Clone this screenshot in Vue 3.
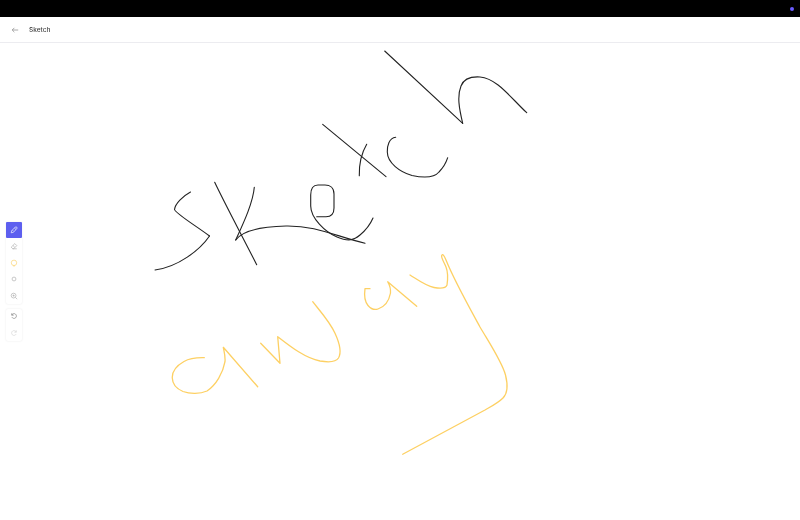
<script setup>
const blackPaths = [
  'M190.5 192 C183 196 175 204 174.5 209.5 C175 213 196 226 209.5 236',
  'M209.5 236 C200 250 178 267 155 270',
  'M214.7 182.3 C224 202 240 232 256.7 264.7',
  'M254.3 187.3 C253 203 243 224 235.7 240',
  'M235.7 240 C243 230 262 226.5 286 226 C316 225.5 335 236 365 243.3',
  'M316.7 216.7 H326 C332 216.7 334 213 334 208 V194 C334 188 330 185 325 185 H318 C313 185 310.7 189 310.7 195 V206 C310.7 218 325 232 337 237 C349 242 354 240 360 235 C366 230 370 225 373 218',
  'M322.7 124.3 L386 176.7',
  'M366.7 144.3 C361 154 359 163 359.3 175.7',
  'M395.7 137.3 C389 138 387 146 387.3 152 C387.5 163 400 172 412 175.5 C424 178 434 178 439 172 C443 168 446 163 447.7 157.7',
  'M384.7 51 L462.7 123.3',
  'M462.7 123.3 C459 108 457 96 461 86 C464 78 472 76.5 480 77 C497 78.5 510 97 526.7 112.7'
]

const yellowPaths = [
  'M204.3 357.7 C196 357.5 190 358 184 361.5 C176 366 172 372 172.3 378 C172.5 385 177 389 183 391.5 C190 394 200 394 207 391 C216 385 223 373 225 361.7 C225.5 356 224 351 223.3 347.3 L257.7 386.7',
  'M260.7 343.3 L280 363.3 L277.7 336.7 C291 347 305 358 320 361 C329 362.5 336 362 338.5 358 C342 352 339 342 335 333.3 C330 322 320 311 312.7 301.7',
  'M370 288.7 H365 C364 296 365 302 368 305.5 C371 309 375 310 378 309 C384 307 389 301 390.5 293 C391 288 389 284 387.7 281.7 L416.7 306.3',
  'M410 275 C418 280 426 286 434 287.5 C440 288.5 446 288 447 285 C448 278 448 272 446 267 C444 262 441 258 441.7 255.5 C442.5 253.5 444 255 446 260 C454 280 468 305 480 327 C490 344 502 362 505.5 375 C508 385 508 393 503 398 C498 403 492 406 485 410 L402.7 454.3'
]
</script>

<template>
  <div class="page">
    <div class="topbar"><span class="dot"></span></div>
    <header class="header">
      <svg class="back" viewBox="0 0 10 10" width="8" height="8" aria-hidden="true">
        <path d="M9 5H1.5M4.2 2.3 1.5 5l2.7 2.7" />
      </svg>
      <span class="title">Sketch</span>
    </header>
    <main class="canvas">
      <svg class="drawing" viewBox="0 43 800 477" aria-hidden="true">
        <path v-for="(d, i) in blackPaths" :key="'b' + i" class="ink-black" :d="d" />
        <path v-for="(d, i) in yellowPaths" :key="'y' + i" class="ink-yellow" :d="d" />
      </svg>
      <aside class="tools">
        <div class="group">
          <button class="tool active">
            <svg viewBox="0 0 10 10" width="8" height="8"><path d="M1.5 8.5 2 6 6.5 1.5a1 1 0 0 1 2 2L4 8 1.5 8.5ZM5.5 2.5l2 2M3.2 5.3l1.5 1.5" /></svg>
          </button>
          <button class="tool">
            <svg viewBox="0 0 10 10" width="8" height="8"><path d="M3.5 8.5 1.5 6.5 6 2l2.5 2.5-4 4h-1ZM3.7 4.3l2.2 2.2M3.5 8.5h5" /></svg>
          </button>
          <button class="tool">
            <svg class="yellow" viewBox="0 0 10 10" width="8" height="8"><circle cx="5" cy="4.8" r="3.4" /><path d="M3.8 8.7h2.4" /></svg>
          </button>
          <button class="tool">
            <svg viewBox="0 0 10 10" width="8" height="8"><circle cx="5" cy="5" r="2.4" /></svg>
          </button>
          <button class="tool">
            <svg viewBox="0 0 10 10" width="8" height="8"><circle cx="4.5" cy="4.5" r="3" /><path d="M6.7 6.7 9 9M3.2 4.5h2.6M4.5 3.2v2.6" /></svg>
          </button>
        </div>
        <div class="group">
          <button class="tool">
            <svg class="dark" viewBox="0 0 10 10" width="8" height="8"><path d="M2.2 1.6v2.4h2.4M2.2 4A3 3 0 1 1 2.4 6.5" /></svg>
          </button>
          <button class="tool">
            <svg class="faint" viewBox="0 0 10 10" width="8" height="8"><path d="M7.8 1.6v2.4H5.4M7.8 4A3 3 0 1 0 7.6 6.5" /></svg>
          </button>
        </div>
      </aside>
    </main>
  </div>
</template>

<style scoped>
.page {
  width: 800px;
  height: 520px;
  display: flex;
  flex-direction: column;
  background: #fff;
  overflow: hidden;
  font-family: Inter, "Liberation Sans", sans-serif;
  filter: blur(0.3px);
}
.topbar {
  height: 17px;
  flex: none;
  background: #000;
  display: flex;
  align-items: center;
  justify-content: flex-end;
  padding-right: 6px;
  box-sizing: border-box;
}
.dot {
  width: 4px;
  height: 4px;
  border-radius: 50%;
  background: #6a5cff;
}
.header {
  height: 26px;
  flex: none;
  box-sizing: border-box;
  border-bottom: 1px solid #ececf0;
  display: flex;
  align-items: center;
  gap: 10px;
  padding: 1px 0 0 11px;
}
.back {
  fill: none;
  stroke: #888;
  stroke-width: 0.9;
}
.title {
  font-size: 6.5px;
  font-weight: 500;
  color: #444;
}
.canvas {
  flex: 1;
  position: relative;
}
.drawing {
  position: absolute;
  inset: 0;
  width: 100%;
  height: 100%;
}
.ink-black,
.ink-yellow {
  fill: none;
  stroke-linecap: round;
  stroke-linejoin: round;
}
.ink-black {
  stroke: #222;
  stroke-width: 1.1;
}
.ink-yellow {
  stroke: #fdd063;
  stroke-width: 1.3;
}
.tools {
  position: absolute;
  left: 6px;
  top: 179px;
  display: flex;
  flex-direction: column;
  gap: 5px;
}
.group {
  width: 16px;
  display: flex;
  flex-direction: column;
  gap: 1px;
  border-radius: 2px;
  background: #fff;
  box-shadow: 0 0 2px rgba(0, 0, 0, 0.1);
}
.tool {
  width: 16px;
  height: 15.5px;
  padding: 0;
  border: 0;
  background: transparent;
  display: flex;
  align-items: center;
  justify-content: center;
}
.tool svg {
  fill: none;
  stroke: #aaa;
  stroke-width: 0.8;
}
.tool.active {
  background: #5d5fef;
  border-radius: 1px;
}
.tool.active svg {
  stroke: #fff;
}
.tool svg.yellow {
  stroke: #fbd26a;
}
.tool svg.dark {
  stroke: #777;
}
.tool svg.faint {
  stroke: #d5d5d5;
}
</style>
